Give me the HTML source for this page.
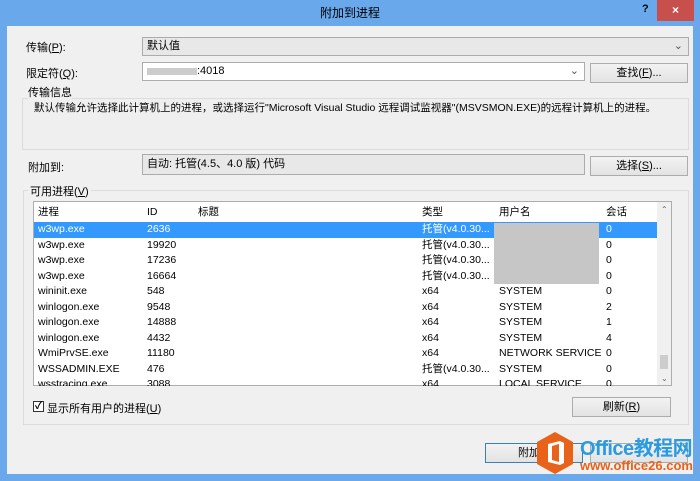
<!DOCTYPE html>
<html><head><meta charset="utf-8"><style>
*{box-sizing:border-box;margin:0;padding:0}
body{width:700px;height:481px;overflow:hidden;background:#6aa8ec;font-family:"Liberation Sans","Microsoft YaHei","Noto Sans CJK SC",sans-serif;font-size:11px;color:#000;position:relative}
.a{position:absolute}
.win{left:7px;top:26px;width:686px;height:448px;background:#f0f0f0}
.title{left:0;top:0;width:700px;height:26px;text-align:center;line-height:26px;font-size:12px;color:#000}
.close{left:657px;top:0;width:37px;height:21px;background:#c7504d;color:#fff;text-align:center;line-height:21px;font-size:12px;font-weight:bold}
.q{left:642px;top:3px;font-weight:bold;color:#000}
.btn{position:absolute;background:linear-gradient(#f2f2f2,#e3e3e3);border:1px solid #acacac;text-align:center;font-size:11px}
.combo{position:absolute;background:#e8e8e8;border:1px solid #acacac;padding-left:4px;font-size:11px}
.row{position:absolute;left:34px;width:623px;height:15.5px;line-height:15px;font-size:10.5px}
.row span{position:absolute}
</style></head><body>
<div class="a title">附加到进程</div>
<div class="a q">?</div>
<div class="a close">×</div>
<div class="a win"></div>
<div class="a" style="left:26px;top:39px">传输(<u>P</u>):</div>
<div class="combo" style="left:142px;top:37px;width:547px;height:19px;line-height:17px">默认值<span style="position:absolute;right:5px;color:#555">⌄</span></div>
<div class="a" style="left:26px;top:65px">限定符(<u>Q</u>):</div>
<div class="combo" style="left:142px;top:62px;width:443px;height:19px;line-height:17px;background:#fff"><span style="display:inline-block;width:50px;height:7px;background:#ccc;vertical-align:middle"></span>:4018<span style="position:absolute;right:5px;color:#555">⌄</span></div>
<div class="btn" style="left:590px;top:63px;width:98px;height:20px;line-height:18px">查找(<u>F</u>)...</div>
<div class="a" style="left:22px;top:98px;width:667px;height:52px;border:1px solid #dcdcdc;background:#efefef"></div>
<div class="a" style="left:28px;top:84px;background:#f0f0f0">传输信息</div>
<div class="a" style="left:34px;top:100px;font-size:10.5px">默认传输允许选择此计算机上的进程，或选择运行"Microsoft Visual Studio 远程调试监视器"(MSVSMON.EXE)的远程计算机上的进程。</div>
<div class="a" style="left:28px;top:159px">附加到:</div>
<div class="combo" style="left:142px;top:154px;width:443px;height:21px;line-height:19px">自动: 托管(4.5、4.0 版) 代码</div>
<div class="btn" style="left:590px;top:156px;width:98px;height:20px;line-height:18px">选择(<u>S</u>)...</div>
<div class="a" style="left:23px;top:190px;width:666px;height:235px;border:1px solid #dcdcdc"></div>
<div class="a" style="left:28px;top:183px;background:#f0f0f0;padding:0 2px">可用进程(<u>V</u>)</div>
<div class="a" style="left:33px;top:201px;width:639px;height:185px;background:#fff;border:1px solid #adadad;overflow:hidden">
<div class="a" style="left:623px;top:0;width:15px;height:185px;background:#f0f0f0"></div>
<div class="a" style="left:627px;top:3px;font-size:8px;color:#666">⌃</div>
<div class="a" style="left:626px;top:153px;width:8px;height:14px;background:#cdcdcd"></div>
<div class="a" style="left:627px;top:172px;font-size:8px;color:#666">⌄</div>
</div>
<div class="a" style="left:33px;top:201px;width:624px;height:185px;overflow:hidden">
<div class="row" style="left:5px;top:4px;height:16px"><span style="left:0">进程</span><span style="left:109px">ID</span><span style="left:160px">标题</span><span style="left:384px">类型</span><span style="left:461px">用户名</span><span style="left:568px">会话</span></div>
<div class="row" style="left:1px;top:21px;background:#3399ff;color:#fff"><span style="left:4px">w3wp.exe</span><span style="left:113px">2636</span><span style="left:388px">托管(v4.0.30...</span><span style="left:572px">0</span></div>
<div class="row" style="left:1px;top:36.5px"><span style="left:4px">w3wp.exe</span><span style="left:113px">19920</span><span style="left:388px">托管(v4.0.30...</span><span style="left:572px">0</span></div>
<div class="row" style="left:1px;top:52px"><span style="left:4px">w3wp.exe</span><span style="left:113px">17236</span><span style="left:388px">托管(v4.0.30...</span><span style="left:572px">0</span></div>
<div class="row" style="left:1px;top:67.5px"><span style="left:4px">w3wp.exe</span><span style="left:113px">16664</span><span style="left:388px">托管(v4.0.30...</span><span style="left:572px">0</span></div>
<div class="row" style="left:1px;top:83px"><span style="left:4px">wininit.exe</span><span style="left:113px">548</span><span style="left:388px">x64</span><span style="left:465px">SYSTEM</span><span style="left:572px">0</span></div>
<div class="row" style="left:1px;top:98.5px"><span style="left:4px">winlogon.exe</span><span style="left:113px">9548</span><span style="left:388px">x64</span><span style="left:465px">SYSTEM</span><span style="left:572px">2</span></div>
<div class="row" style="left:1px;top:114px"><span style="left:4px">winlogon.exe</span><span style="left:113px">14888</span><span style="left:388px">x64</span><span style="left:465px">SYSTEM</span><span style="left:572px">1</span></div>
<div class="row" style="left:1px;top:129.5px"><span style="left:4px">winlogon.exe</span><span style="left:113px">4432</span><span style="left:388px">x64</span><span style="left:465px">SYSTEM</span><span style="left:572px">4</span></div>
<div class="row" style="left:1px;top:145px"><span style="left:4px">WmiPrvSE.exe</span><span style="left:113px">11180</span><span style="left:388px">x64</span><span style="left:465px">NETWORK SERVICE</span><span style="left:572px">0</span></div>
<div class="row" style="left:1px;top:160.5px"><span style="left:4px">WSSADMIN.EXE</span><span style="left:113px">476</span><span style="left:388px">托管(v4.0.30...</span><span style="left:465px">SYSTEM</span><span style="left:572px">0</span></div>
<div class="row" style="left:1px;top:176px"><span style="left:4px">wsstracing.exe</span><span style="left:113px">3088</span><span style="left:388px">x64</span><span style="left:465px">LOCAL SERVICE</span><span style="left:572px">0</span></div>
<div class="a" style="left:461px;top:22px;width:105px;height:61px;background:#c6c6c6"></div>
</div>
<div class="a" style="left:33px;top:401px;width:11px;height:11px;border:1px solid #333;background:#fff;font-size:10px;line-height:9px;text-align:center;font-weight:bold">✓</div>
<div class="a" style="left:47px;top:400px">显示所有用户的进程(<u>U</u>)</div>
<div class="btn" style="left:572px;top:397px;width:99px;height:20px;line-height:18px">刷新(<u>R</u>)</div>
<div class="btn" style="left:485px;top:443px;width:98px;height:20px;line-height:18px;border-color:#3c7fb1;text-align:left;padding-left:32px">附加</div>
<div class="btn" style="left:590px;top:443px;width:98px;height:20px"></div>
<svg class="a" style="left:535px;top:431px" width="40" height="44" viewBox="0 0 40 44"><polygon points="20,1 38,11 38,33 20,43 2,33 2,11" fill="#e8621a"/><path d="M13 13 L25 10 L29 12 L29 32 L25 34 L13 31 Z M17 15 L17 29 L24 31 L24 13 Z" fill="#fff" fill-rule="evenodd"/></svg>
<div class="a" style="left:580px;top:432px;font-size:20px;font-weight:bold;color:#2a9be0;letter-spacing:-0.5px">Office<span style="font-family:'Noto Sans CJK SC',sans-serif">教程网</span></div>
<div class="a" style="left:580px;top:458px;font-size:13px;font-weight:bold;color:#e8621a">www.office26.com</div>
</body></html>
